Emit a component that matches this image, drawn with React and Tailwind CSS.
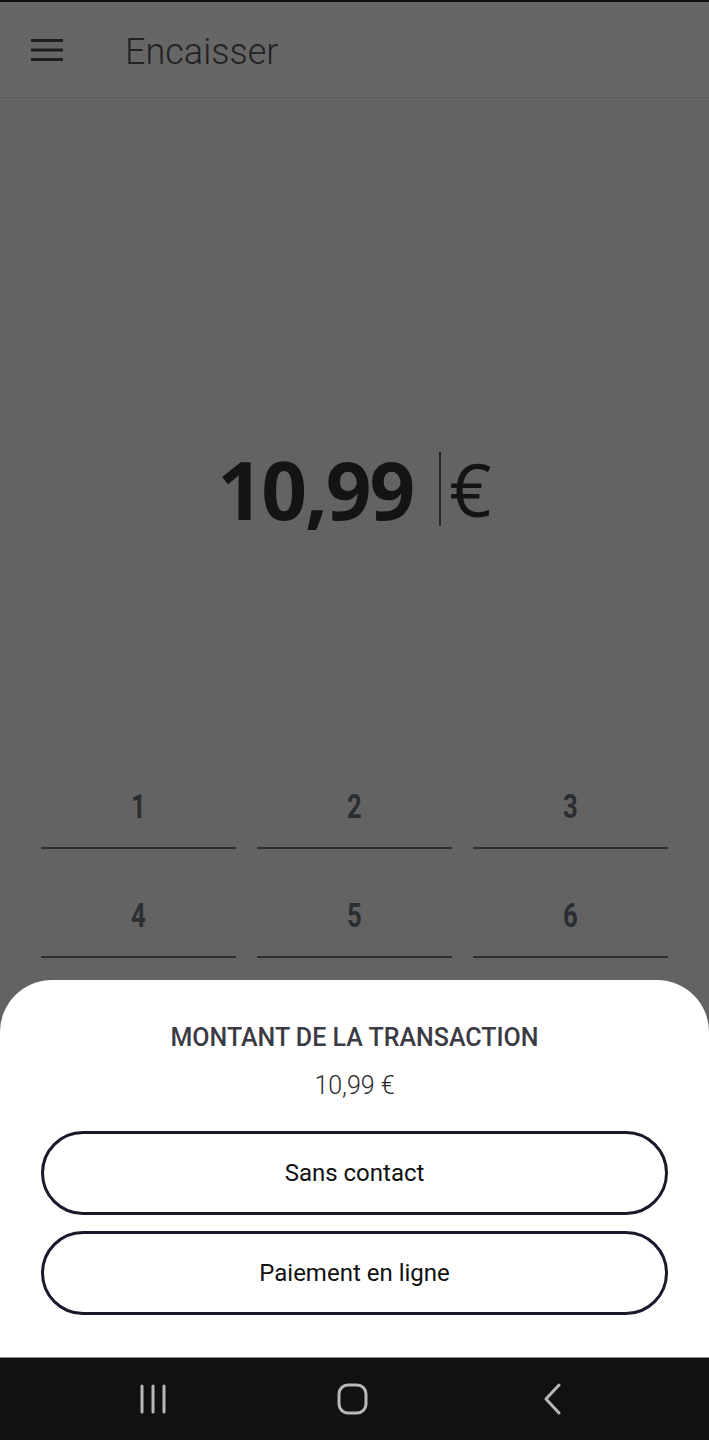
import React from 'react';

export default function App() {
  const rows = [
    ['1', '2', '3'],
    ['4', '5', '6'],
  ];

  return (
    <div className="relative h-[1440px] w-[709px] overflow-hidden bg-[#636363] font-['Roboto',sans-serif]">
      <div className="h-[2px] bg-[#111111]" />

      {/* Header */}
      <div className="flex h-[96px] items-center border-b border-[#5b5b5b] bg-[#666666] px-[31px]">
        <svg width="32" height="22" viewBox="0 0 32 22" className="mt-[1px]">
          <rect x="0" y="0" width="32" height="3" fill="#1e1e1e" />
          <rect x="0" y="9.5" width="32" height="3" fill="#1e1e1e" />
          <rect x="0" y="19" width="32" height="3" fill="#1e1e1e" />
        </svg>
        <span className="ml-[62px] mt-[4px] text-[36px] font-light text-[#222222]">Encaisser</span>
      </div>

      {/* Amount */}
      <div className="pt-[351px]">
        <div className="flex h-[80px] items-center justify-center font-['Open_Sans',sans-serif] text-[80px] leading-none text-[#141414]">
          <span className="font-bold tracking-[-2px]">10,99</span>
          <span className="ml-[26px] h-[74px] w-[2px] bg-[#262626]" />
          <span className="ml-[8px] text-[74px] font-normal">€</span>
        </div>
      </div>

      {/* Keypad (the rest sits under the sheet) */}
      <div className="mt-[211px] flex flex-col px-[41px]">
        {rows.map((row, i) => (
          <div key={i} className="grid h-[109px] grid-cols-3 gap-[21px]">
            {row.map((d) => (
              <div
                key={d}
                className="flex items-end justify-center border-b-2 border-[#2e2e2e] pb-[24px] text-[33px] font-bold leading-[32px] text-[#2b2e31]"
              >
                <span className="inline-block scale-x-[0.78]">{d}</span>
              </div>
            ))}
          </div>
        ))}
      </div>

      {/* Bottom sheet */}
      <div className="absolute left-0 right-0 top-[980px] flex h-[377px] flex-col items-center rounded-t-[52px] bg-white px-[41px] pt-[43px]">
        <div className="text-[25px] font-medium leading-[30px] text-[#3b3b45]">MONTANT DE LA TRANSACTION</div>
        <div className="mt-[18px] text-[25px] font-light leading-[30px] text-[#2a2a2a]">10,99 €</div>
        <div className="mt-[30px] flex w-full flex-col gap-[16px]">
          <button className="flex h-[84px] w-full items-center justify-center rounded-full border-[3px] border-[#181a2c] text-[24px] text-[#111111]">
            Sans contact
          </button>
          <button className="flex h-[84px] w-full items-center justify-center rounded-full border-[3px] border-[#181a2c] text-[24px] text-[#111111]">
            Paiement en ligne
          </button>
        </div>
      </div>

      {/* Navigation bar */}
      <div className="absolute bottom-0 left-0 right-0 flex h-[83px] items-center border-t border-[#8a8a8a] bg-[#111111]">
        <svg width="30" height="30" viewBox="0 0 30 30" className="ml-[139px]">
          <g stroke="#b8b8b8" strokeWidth="3" strokeLinecap="round">
            <line x1="3" y1="2" x2="3" y2="28" />
            <line x1="14" y1="2" x2="14" y2="28" />
            <line x1="25" y1="2" x2="25" y2="28" />
          </g>
        </svg>
        <svg width="32" height="32" viewBox="0 0 32 32" className="ml-[168px]">
          <rect x="2" y="2" width="27" height="28" rx="9" fill="none" stroke="#b8b8b8" strokeWidth="3" />
        </svg>
        <svg width="22" height="32" viewBox="0 0 22 32" className="ml-[173px]">
          <polyline points="17,2 4,16 17,30" fill="none" stroke="#b8b8b8" strokeWidth="3" strokeLinecap="round" strokeLinejoin="round" />
        </svg>
      </div>
    </div>
  );
}
